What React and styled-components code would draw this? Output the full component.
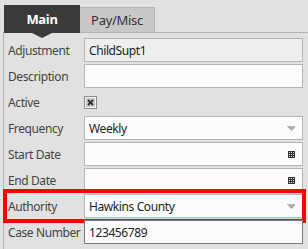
import React from "react";
import styled, { createGlobalStyle } from "styled-components";

const GlobalStyle = createGlobalStyle`
  body {
    margin: 0;
    background: #e1e1e1;
    font-family: "Segoe UI", "Noto Sans", "Open Sans", sans-serif;
  }
`;

const Page = styled.div`
  padding: 5px 0 0 3px;
`;

const TabBar = styled.div`
  display: flex;
  align-items: flex-end;
  height: 27px;
  padding-left: 1px;
`;

const Tab = styled.div`
  position: relative;
  z-index: 2;
  box-sizing: border-box;
  display: flex;
  align-items: center;
  justify-content: center;
  font-size: 13px;
  letter-spacing: -0.3px;
  width: ${(p) => (p.$active ? "76px" : "75px")};
  height: ${(p) => (p.$active ? "28px" : "25px")};
  margin-bottom: ${(p) => (p.$active ? "-1px" : "0")};
  background: ${(p) => (p.$active ? "#3a3a3a" : "#c8c8c8")};
  color: ${(p) => (p.$active ? "#fff" : "#333")};
  font-weight: ${(p) => (p.$active ? 700 : 400)};
  border: ${(p) => (p.$active ? "none" : "1px solid #b3b3b3")};
  border-bottom: none;
  border-left: none;

  &::after {
    content: "";
    display: ${(p) => (p.$active ? "block" : "none")};
    position: absolute;
    left: 50%;
    bottom: -5px;
    margin-left: -10px;
    border-left: 10px solid transparent;
    border-right: 10px solid transparent;
    border-top: 5px solid #3a3a3a;
  }
`;

const Panel = styled.div`
  border-top: 1px solid #b3b3b3;
  border-left: 1px solid #b3b3b3;
  padding: 5px 5px 5px 0;
  display: flex;
  flex-direction: column;
  gap: 2px;
  min-height: 210px;
`;

const Row = styled.div`
  position: relative;
  display: grid;
  grid-template-columns: 80px 1fr;
  align-items: center;
  height: 24px;

  &::before {
    content: "";
    display: ${(p) => (p.$highlight ? "block" : "none")};
    position: absolute;
    top: -5px;
    bottom: -5px;
    left: -1px;
    right: -3px;
    border: 4px solid #ff0000;
    pointer-events: none;
  }
`;

const Label = styled.div`
  padding-left: 4px;
  font-size: 12px;
  letter-spacing: -0.4px;
  color: #444;
  white-space: nowrap;
`;

const Field = styled.div`
  box-sizing: border-box;
  height: 24px;
  display: flex;
  align-items: center;
  justify-content: space-between;
  padding: 0 7px 0 4px;
  font-size: 12px;
  letter-spacing: -0.4px;
  color: #222;
  background: ${(p) => (p.$readOnly ? "#eeeeee" : "#fcfcfc")};
  border: 1px solid ${(p) => (p.$focused ? "#7c7c7c" : "#b5b5b5")};
`;

const Check = styled.div`
  display: flex;
  align-items: center;
`;

const Arrow = () => (
  <svg width="8" height="5" viewBox="0 0 8 5" shapeRendering="crispEdges">
    <rect x="0" y="0" width="8" height="1" fill="#b8b8b8" />
    <path d="M0 1 H8 L4 5 Z" fill="#b0b0b0" />
  </svg>
);

const Calendar = () => (
  <svg width="7" height="7" viewBox="0 0 7 7" shapeRendering="crispEdges">
    <rect width="7" height="7" fill="#333" />
    {[1, 3, 5].map((y) =>
      [1, 3, 5].map((x) => (
        <rect key={`${x}-${y}`} x={x} y={y} width="1" height="1" fill="#d8d8d8" />
      ))
    )}
  </svg>
);

const CheckBox = () => (
  <svg width="13" height="13" viewBox="0 0 13 13" shapeRendering="crispEdges">
    <rect x="0.5" y="0.5" width="12" height="12" fill="#f4f4f4" stroke="#8c8c8c" />
    <rect x="2" y="2" width="9" height="9" fill="#c9c9c9" />
    <path d="M4 4 L9 9 M9 4 L4 9" stroke="#2e2e2e" strokeWidth="1.8" shapeRendering="geometricPrecision" />
  </svg>
);

const rows = [
  { label: "Adjustment", value: "ChildSupt1", readOnly: true },
  { label: "Description", value: "" },
  { label: "Active", check: true },
  { label: "Frequency", value: "Weekly", icon: "arrow" },
  { label: "Start Date", value: "", icon: "cal" },
  { label: "End Date", value: "", icon: "cal" },
  { label: "Authority", value: "Hawkins County", icon: "arrow", highlight: true },
  { label: "Case Number", value: "123456789", focused: true },
];

export default function App() {
  return (
    <Page>
      <GlobalStyle />
      <TabBar>
        <Tab $active>Main</Tab>
        <Tab>Pay/Misc</Tab>
      </TabBar>
      <Panel>
        {rows.map((r) => (
          <Row key={r.label} $highlight={r.highlight}>
            <Label>{r.label}</Label>
            {r.check ? (
              <Check>
                <CheckBox />
              </Check>
            ) : (
              <Field $readOnly={r.readOnly} $focused={r.focused}>
                <span>{r.value}</span>
                {r.icon === "arrow" && <Arrow />}
                {r.icon === "cal" && <Calendar />}
              </Field>
            )}
          </Row>
        ))}
      </Panel>
    </Page>
  );
}
